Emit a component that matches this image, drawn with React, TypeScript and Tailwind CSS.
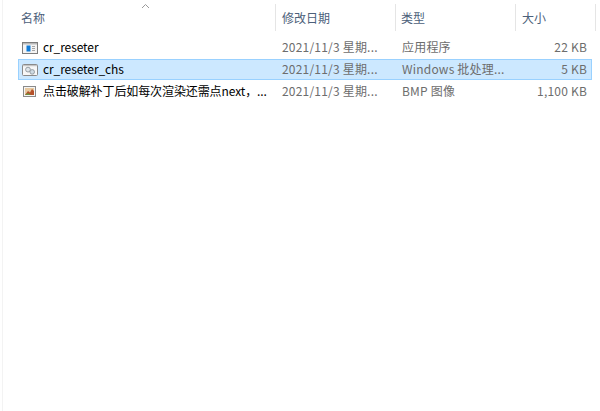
const FONT = "font-['Microsoft_YaHei','Noto_Sans_CJK_SC','Noto_Sans',sans-serif]";

function AppIcon() {
  return (
    <svg width="16" height="12" viewBox="0 0 16 12" className="shrink-0">
      <rect x="0.5" y="0.5" width="15" height="11" fill="#f4f4f4" stroke="#7d7d7d" />
      <rect x="1" y="1" width="14" height="1.5" fill="#b9b9b9" />
      <rect x="4.5" y="3.5" width="4" height="6" fill="#0f7bd8" />
      <path d="M10 4.5h3M10 6.5h3M10 8.5h3" stroke="#a5a5a5" strokeWidth="1" />
    </svg>
  );
}

function BatIcon() {
  return (
    <svg width="16" height="12" viewBox="0 0 16 12" className="shrink-0">
      <rect x="0.5" y="0.5" width="15" height="11" rx="1" fill="#f7f7f7" stroke="#8a8a8a" />
      <rect x="1" y="1" width="14" height="1.2" fill="#c4c4c4" />
      <circle cx="6" cy="5.6" r="2.4" fill="#dfe5ea" stroke="#8f969c" strokeWidth="0.9" />
      <circle cx="10.2" cy="7.9" r="2.3" fill="#cfdbe4" stroke="#8f969c" strokeWidth="0.9" />
    </svg>
  );
}

function BmpIcon() {
  return (
    <svg width="13" height="11" viewBox="0 0 13 11" className="ml-[1px] shrink-0">
      <rect x="0.5" y="0.5" width="12" height="10" fill="#f5f5f5" stroke="#8a8a8a" />
      <rect x="2" y="2" width="9" height="7" fill="#e7c9a0" />
      <path d="M2 9l3-4 2 1.5L9 3l2 2v4z" fill="#b5512a" />
      <path d="M2 9l3-2 3 2z" fill="#6d8f3c" />
    </svg>
  );
}

const rows = [
  { icon: <AppIcon />, name: "cr_reseter", date: "2021/11/3 星期...", type: "应用程序", size: "22 KB", selected: false },
  { icon: <BatIcon />, name: "cr_reseter_chs", date: "2021/11/3 星期...", type: "Windows 批处理...", size: "5 KB", selected: true },
  { icon: <BmpIcon />, name: "点击破解补丁后如每次渲染还需点next，...", date: "2021/11/3 星期...", type: "BMP 图像", size: "1,100 KB", selected: false },
];

const headers = [
  { label: "名称", width: "w-[256px]", pad: "pl-[1px]" },
  { label: "修改日期", width: "w-[120px]", pad: "pl-[6px]" },
  { label: "类型", width: "w-[120px]", pad: "pl-[5px]" },
  { label: "大小", width: "w-[80px]", pad: "pl-[6px]" },
];

export default function App() {
  return (
    <div className={`${FONT} relative h-[411px] w-[600px] overflow-hidden bg-white pl-[20px] text-[12px]`}>
      <div className="absolute left-[2px] top-0 h-full w-[1px] bg-[#f3f3f3]" />
      <div className="relative flex h-[31px] pt-[4px]">
        <svg width="10" height="6" viewBox="0 0 10 6" className="absolute left-[121px] top-[3px]">
          <path d="M1 5l3.5-3.5L8 5" fill="none" stroke="#9a9a9a" strokeWidth="1" />
        </svg>
        {headers.map((h) => (
          <div key={h.label} className={`${h.width} ${h.pad} flex h-[27px] items-center border-r border-r-[#e5e5e5] text-[#4c607a]`}>
            {h.label}
          </div>
        ))}
      </div>
      <div className="ml-[-2px] mt-[6px] flex w-[574px] flex-col gap-[1px]">
        {rows.map((r) => (
          <div
            key={r.name}
            className={`flex h-[21px] items-center border pb-[2px] ${r.selected ? "border-[#99d1ff] bg-[#cce8ff]" : "border-transparent"}`}
          >
            <div className="flex w-[257px] items-center">
              <div className="flex w-[24px] pl-[3px] pt-[2px]">{r.icon}</div>
              <span className="whitespace-nowrap tracking-[-0.1px] text-black">{r.name}</span>
            </div>
            <div className="w-[120px] whitespace-nowrap pl-[6px] tracking-[0.2px] text-[#6d6d6d]">{r.date}</div>
            <div className="w-[120px] whitespace-nowrap pl-[6px] tracking-[0.2px] text-[#6d6d6d]">{r.type}</div>
            <div className="flex-1 whitespace-nowrap pr-[4px] text-right tracking-[0.2px] text-[#6d6d6d]">{r.size}</div>
          </div>
        ))}
      </div>
    </div>
  );
}
